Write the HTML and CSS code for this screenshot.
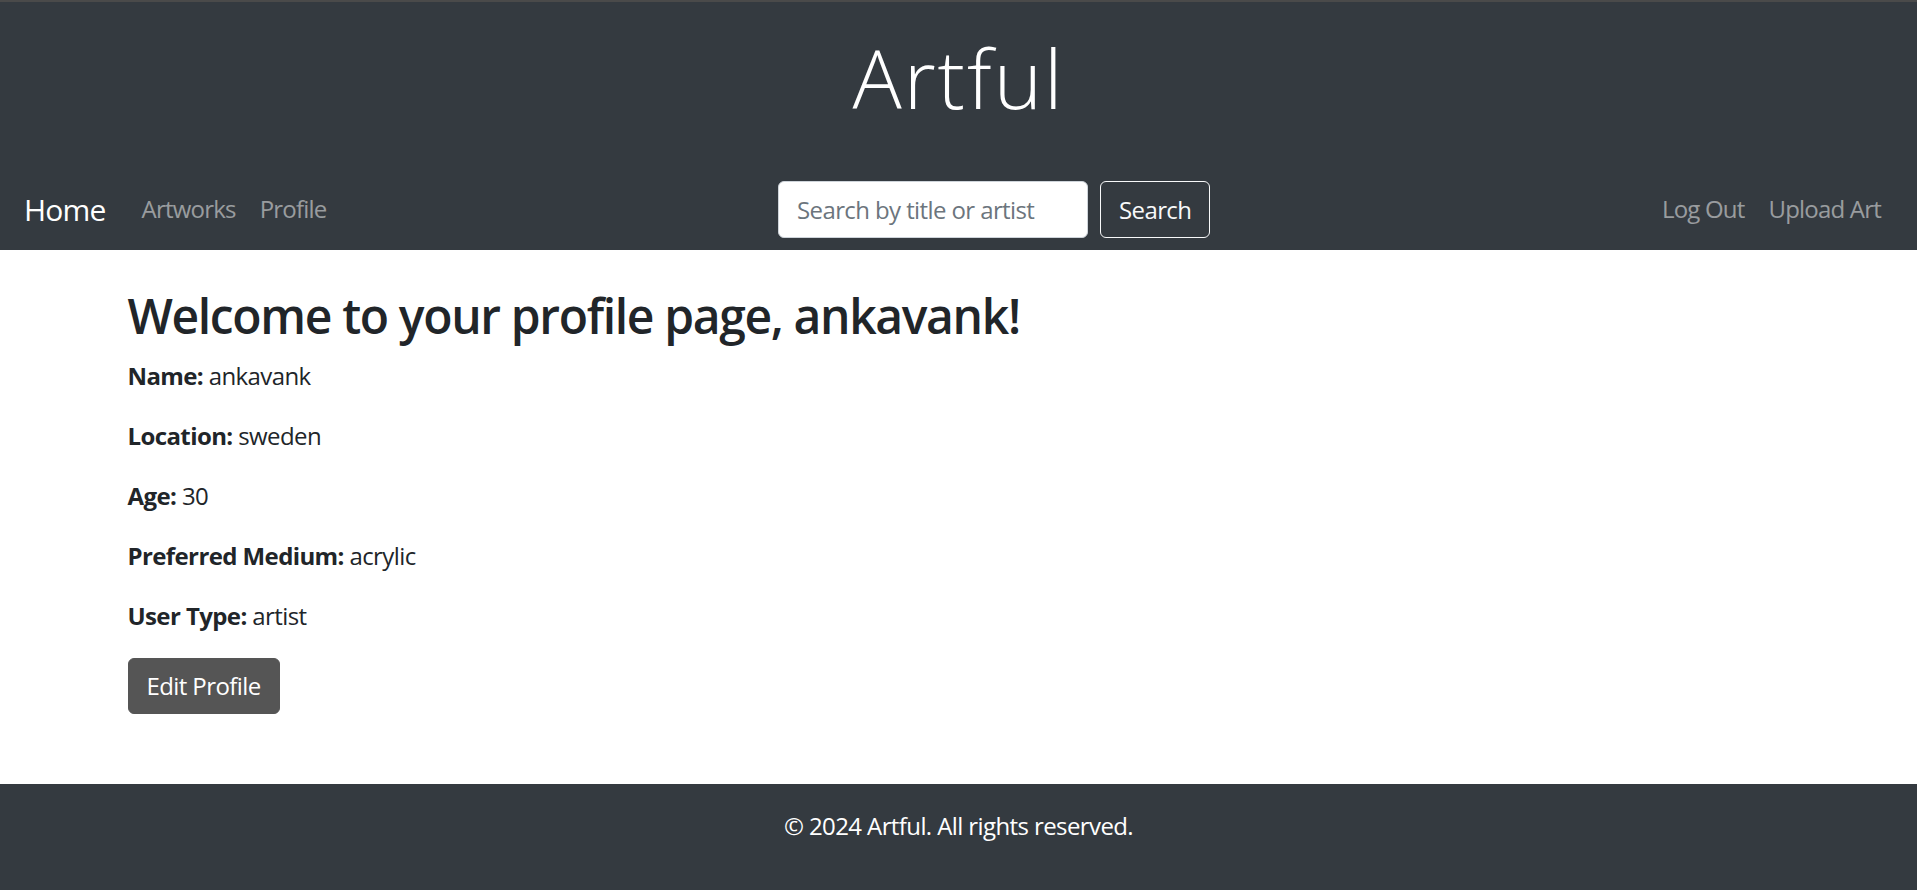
FILE: index.html
```html
<!DOCTYPE html>
<html lang="en">
<head>
<meta charset="utf-8">
<title>Artful - Profile</title>
<link rel="stylesheet" href="styles.css">
</head>
<body>
<header class="site-header">
  <h1 class="site-title">Artful</h1>
  <nav class="navbar">
    <a class="brand" href="#">Home</a>
    <ul class="nav-list">
      <li><a class="nav-link" href="#">Artworks</a></li>
      <li><a class="nav-link" href="#">Profile</a></li>
    </ul>
    <form class="search-form">
      <input class="search-input" type="search" placeholder="Search by title or artist">
      <button class="btn-outline" type="button">Search</button>
    </form>
    <ul class="nav-list">
      <li><a class="nav-link" href="#">Log Out</a></li>
      <li><a class="nav-link" href="#">Upload Art</a></li>
    </ul>
  </nav>
</header>
<main class="container">
  <h1 class="page-title">Welcome to your profile page, ankavank!</h1>
  <p class="field"><strong>Name:</strong> ankavank</p>
  <p class="field"><strong>Location:</strong> sweden</p>
  <p class="field"><strong>Age:</strong> 30</p>
  <p class="field"><strong>Preferred Medium:</strong> acrylic</p>
  <p class="field"><strong>User Type:</strong> artist</p>
  <a class="btn-edit" href="#">Edit Profile</a>
</main>
<footer class="site-footer">
  <p>&copy; 2024 Artful. All rights reserved.</p>
</footer>
</body>
</html>
```

FILE: styles.css
```css
* { box-sizing: border-box; }
html, body { margin: 0; padding: 0; }
body {
  font-family: "Open Sans", "Noto Sans", sans-serif;
  font-size: 24px;
  line-height: 1.5;
  letter-spacing: -0.6px;
  color: #212529;
  background: #fff;
}
a { text-decoration: none; }

.site-header {
  background: #343a40;
  border-top: 2px solid #4a4a4a;
}
.site-title {
  margin: 0;
  height: 166px;
  padding-top: 26px;
  text-align: center;
  font-weight: 300;
  font-size: 82px;
  line-height: 1.2;
  letter-spacing: 2px;
  color: #fff;
}
.navbar {
  display: flex;
  align-items: center;
  padding: 12px 24px;
  height: 82px;
}
.brand {
  font-size: 30px;
  color: #fff;
  margin-right: 24px;
  line-height: 1.5;
  letter-spacing: -0.8px;
}
.nav-list {
  display: flex;
  list-style: none;
  margin: 0;
  padding: 0;
}
.nav-link {
  display: block;
  padding: 12px;
  letter-spacing: -0.8px;
  color: rgba(255,255,255,.5);
}
.search-form {
  display: flex;
  align-items: center;
  margin: 0 auto;
}
.search-input {
  width: 310px;
  height: 57px;
  padding: 9px 18px;
  font-family: inherit;
  font-size: 24px;
  letter-spacing: -0.6px;
  color: #495057;
  background: #fff;
  border: 1px solid #ced4da;
  border-radius: 6px;
  margin-right: 12px;
}
.search-input::placeholder { color: #6c757d; }
.btn-outline {
  height: 57px;
  padding: 9px 18px;
  font-family: inherit;
  font-size: 24px;
  letter-spacing: -0.6px;
  color: #f8f9fa;
  background: transparent;
  border: 1px solid #f8f9fa;
  border-radius: 6px;
}

.container {
  max-width: 1710px;
  margin: 30px auto 0;
  padding: 0 24px 70px;
}
.page-title {
  margin: 0 0 6px;
  font-size: 48px;
  font-weight: 600;
  line-height: 72px;
  letter-spacing: -1.35px;
}
.field { margin: 0 0 24px; }
.field strong { font-weight: 700; }
.btn-edit {
  display: inline-block;
  padding: 9px 18px;
  font-size: 24px;
  line-height: 1.5;
  color: #fff;
  background: #555;
  border: 1px solid #555;
  border-radius: 6px;
}

.site-footer {
  background: #343a40;
  color: #fff;
  text-align: center;
  padding: 24px 0;
}
.site-footer p { margin: 0 0 24px; }
```
